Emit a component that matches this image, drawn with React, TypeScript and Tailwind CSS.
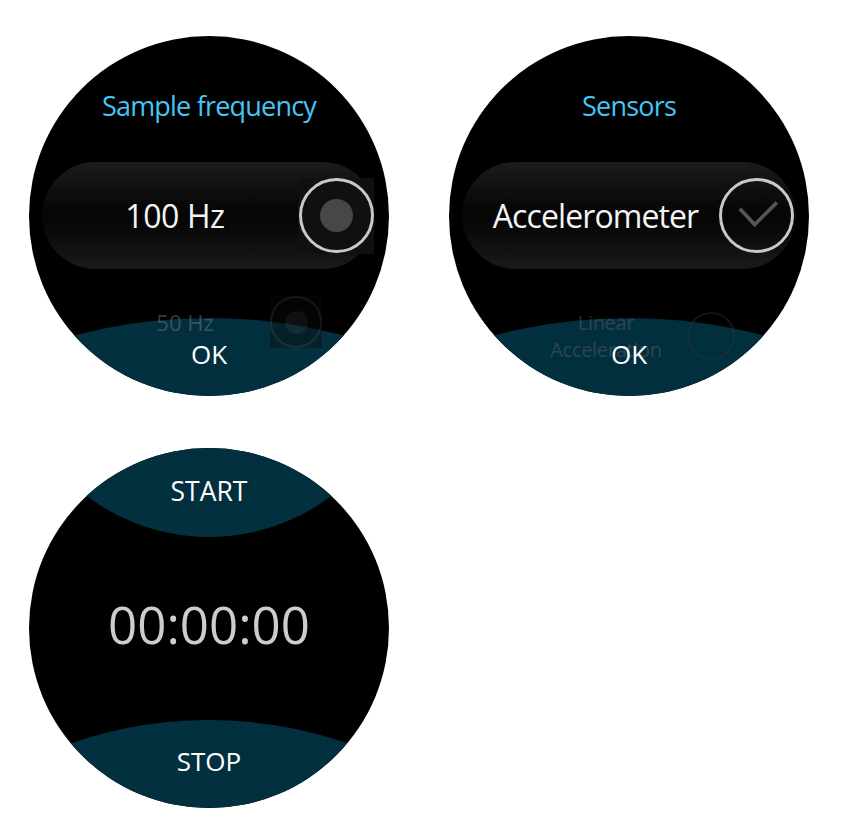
import React from "react";

const font = { fontFamily: '"Open Sans", "Noto Sans", sans-serif' };

function Radio({ size, dim }: { size: "lg" | "sm"; dim?: boolean }) {
  if (size === "lg") {
    return (
      <div className="flex h-[76px] w-[76px] shrink-0 items-center justify-center bg-[#101010]">
        <div className="flex h-[75px] w-[75px] items-center justify-center rounded-full border-[3px] border-[#c9c9c9]">
          <div className="h-[33px] w-[33px] rounded-full bg-[#474747]" />
        </div>
      </div>
    );
  }
  return (
    <div className={`flex h-[52px] w-[52px] shrink-0 items-center justify-center ${dim ? "bg-[#0a0a0a]" : ""}`}>
      <div className="flex h-[52px] w-[52px] items-center justify-center rounded-full border-2 border-[#3a3a3a]">
        <div className="h-[23px] w-[23px] rounded-full bg-[#2a2a2a]" />
      </div>
    </div>
  );
}

function Check({ size }: { size: number }) {
  const big = size > 60;
  return (
    <div
      className={`flex shrink-0 items-center justify-center rounded-full ${
        big ? "h-[75px] w-[75px] border-[3px] border-[#c9c9c9]" : "h-[48px] w-[48px] border-2 border-[#333]"
      }`}
    >
      <svg viewBox="0 0 76 76" className={big ? "h-[69px] w-[69px]" : "h-[44px] w-[44px]"}>
        <path
          d="M21 32 L36 48 L59 25"
          fill="none"
          stroke={big ? "#565656" : "#2c2c2c"}
          strokeWidth={big ? 4 : 3}
          strokeLinecap="square"
        />
      </svg>
    </div>
  );
}

function Pill({ children }: { children: React.ReactNode }) {
  return (
    <div className="mx-[13px] mt-[39px] flex h-[107px] items-center rounded-full bg-linear-to-b from-[#1c1c1c] via-[#050505] to-[#1a1a1a] pl-[10px] pr-[2px]">
      {children}
    </div>
  );
}

function BottomButton() {
  return (
    <div className="absolute left-[-349px] top-[282px] h-[1058px] w-[1058px] rounded-full bg-[#03303f]" />
  );
}

function Watch({ children }: { children: React.ReactNode }) {
  return (
    <div className="relative h-[360px] w-[360px] overflow-hidden rounded-full bg-black" style={font}>
      {children}
    </div>
  );
}

export default function App() {
  return (
    <div className="min-h-screen bg-white pl-[29px] pt-[36px]">
      <div className="grid grid-cols-[360px_360px] gap-x-[60px] gap-y-[52px]">
        <Watch>
          <div className="mt-[53px] h-[34px] text-center text-[27px] leading-[34px] tracking-[-0.8px] text-[#44c6f4]">
            Sample frequency
          </div>
          <Pill>
            <span className="flex-1 text-center text-[32px] tracking-[-0.4px] text-[#f4f4f4]">100 Hz</span>
            <Radio size="lg" />
          </Pill>
          <BottomButton />
          <div className="relative mt-[27px] flex h-[52px] items-center pl-[100px] opacity-40">
            <span className="w-[112px] text-center text-[22px] leading-[30px] text-[#8a8a8a]">50 Hz</span>
            <div className="ml-[29px]">
              <Radio size="sm" dim />
            </div>
          </div>
          <div className="absolute inset-x-0 top-[303px] flex justify-center">
            <span className="h-[30px] text-[26px] leading-[30px] text-white">OK</span>
          </div>
        </Watch>

        <Watch>
          <div className="mt-[53px] h-[34px] text-center text-[27px] leading-[34px] tracking-[-0.8px] text-[#44c6f4]">
            Sensors
          </div>
          <Pill>
            <span className="flex-1 text-center text-[32px] tracking-[-0.9px] text-[#f4f4f4]">Accelerometer</span>
            <Check size={76} />
          </Pill>
          <BottomButton />
          <div className="relative mt-[40px] flex h-[54px] items-center pl-[100px] opacity-40">
            <span className="w-[114px] text-center text-[20px] leading-[27px] tracking-[-0.3px] text-[#6a6a6a]">
              Linear
              <br />
              Acceleration
            </span>
            <div className="ml-[24px]">
              <Check size={48} />
            </div>
          </div>
          <div className="absolute inset-x-0 top-[303px] flex justify-center">
            <span className="h-[30px] text-[26px] leading-[30px] text-white">OK</span>
          </div>
        </Watch>

        <Watch>
          <div className="absolute left-[-23px] top-[-317px] flex h-[406px] w-[406px] flex-col items-center justify-end rounded-full bg-[#03303f] pb-[31px]">
            <span className="h-[30px] text-[26.5px] leading-[30px] text-white">START</span>
          </div>
          <div className="flex h-full items-center justify-center pb-[9px]">
            <span className="text-[51px] leading-[60px] text-[#cdcdcd]">00:00:00</span>
          </div>
          <div className="absolute left-[-240px] top-[272px] flex h-[840px] w-[840px] justify-center rounded-full bg-[#03303f] pt-[26px]">
            <span className="h-[30px] text-[26px] leading-[30px] text-white">STOP</span>
          </div>
        </Watch>
      </div>
    </div>
  );
}
